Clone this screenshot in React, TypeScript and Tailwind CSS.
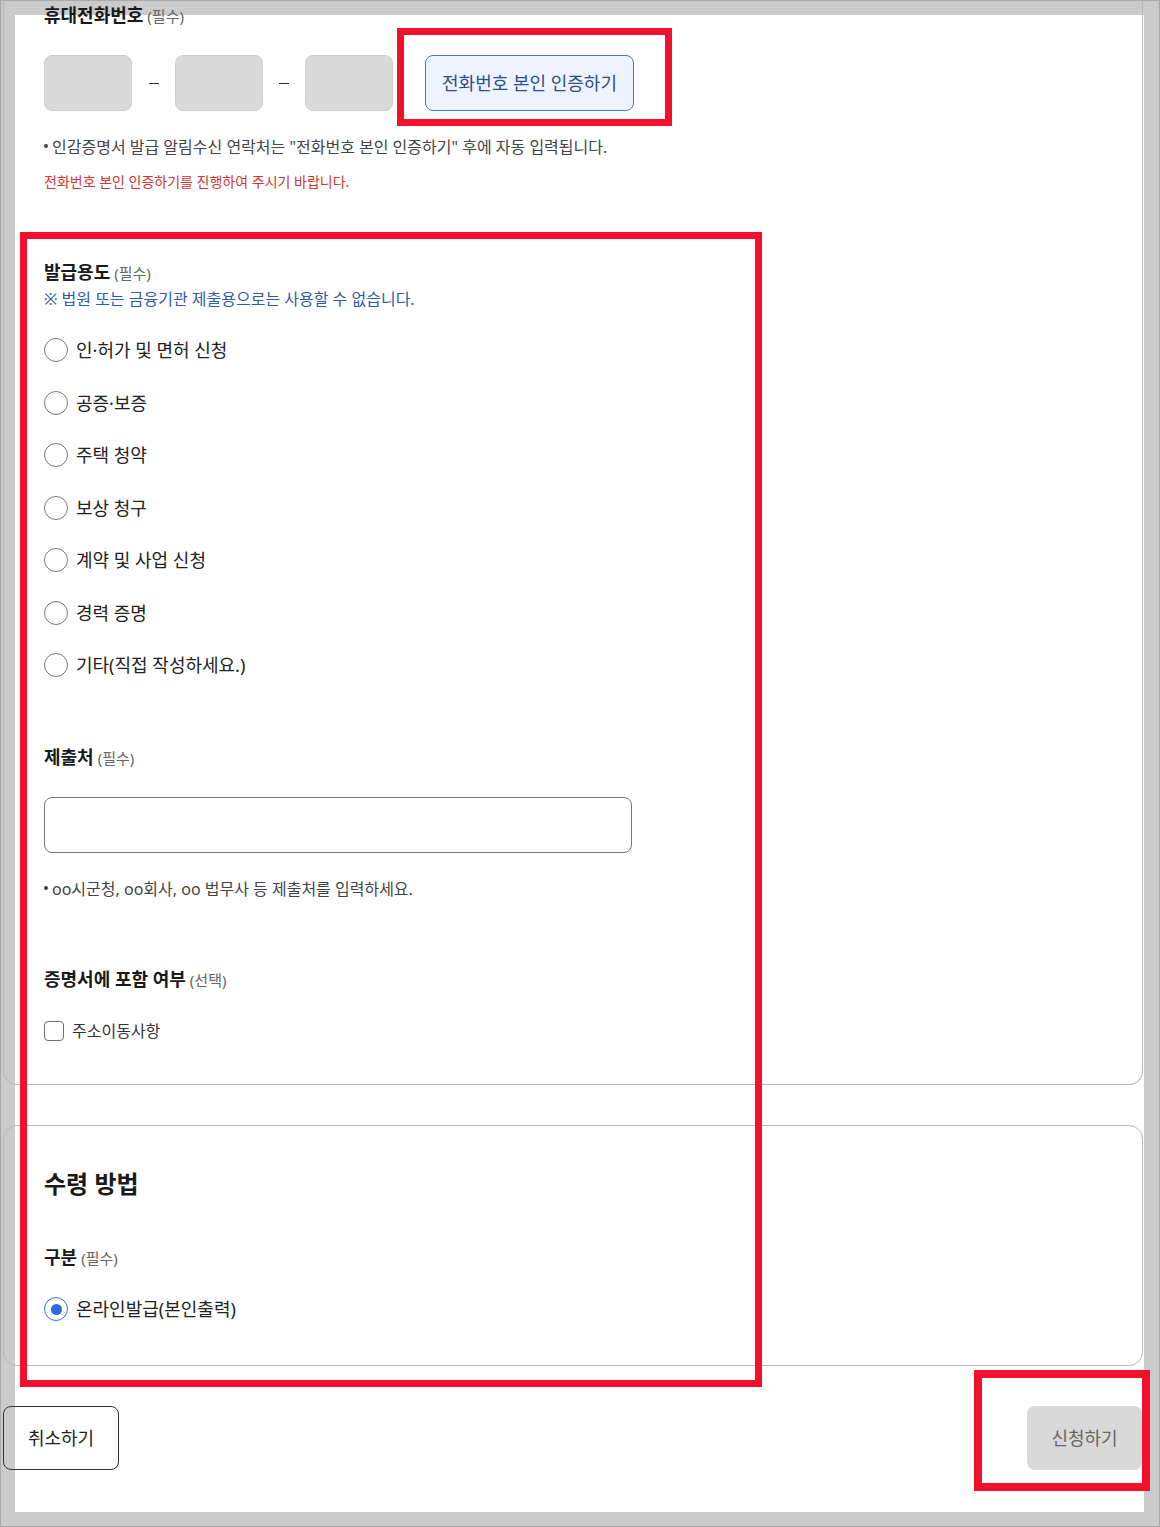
import React from "react";

function Radio({ label, checked = false }: { label: string; checked?: boolean }) {
  return (
    <div className="flex items-center h-[24px]">
      {checked ? (
        <span className="flex items-center justify-center w-[24px] h-[24px] rounded-full border border-[#3b72d6] bg-white">
          <span className="w-[11px] h-[11px] rounded-full bg-[#2a6be0]" />
        </span>
      ) : (
        <span className="w-[24px] h-[24px] rounded-full border border-[#7a7a7a] bg-white" />
      )}
      <span className="ml-[8px] text-[18px] leading-[24px] whitespace-nowrap text-[#222]">{label}</span>
    </div>
  );
}

function Label({ title, note }: { title: string; note: string }) {
  return (
    <div className="flex items-baseline h-[24px] whitespace-nowrap">
      <span className="text-[18px] leading-[24px] font-bold text-[#1a1a1a]">{title}</span>
      <span className="ml-[4px] text-[15px] leading-[24px] text-[#666]">{note}</span>
    </div>
  );
}

function Bullet({ children }: { children: React.ReactNode }) {
  return (
    <p className="flex items-center h-[24px] whitespace-nowrap text-[16px] leading-[24px] text-[#444]">
      <span className="w-[4px] h-[4px] rounded-full bg-[#444] mr-[4px] -mt-[2px]" />
      {children}
    </p>
  );
}

export default function App() {
  const uses = [
    "인·허가 및 면허 신청",
    "공증·보증",
    "주택 청약",
    "보상 청구",
    "계약 및 사업 신청",
    "경력 증명",
    "기타(직접 작성하세요.)",
  ];
  return (
    <div className="relative w-[1160px] h-[1527px] overflow-hidden bg-[#cbcbcb] border border-[#a9a9a9] font-['Noto_Sans','Noto_Sans_CJK_KR',sans-serif] text-[#222]">
      <div className="ml-[14px] mt-[14px] w-[1129px] h-[1497px] bg-white flex flex-col">
        <div className="-mt-[15px] -ml-[12px] w-[1140px] flex flex-col">
          {/* card 1 */}
          <div className="border-x border-b border-[#b9b9b9] rounded-b-[14px] pl-[40px] pt-[3px] pb-[43px] flex flex-col">
            <Label title="휴대전화번호" note="(필수)" />
            <div className="mt-[28px] flex items-center h-[56px]">
              <div className="w-[88px] h-[56px] rounded-[8px] bg-[#d9d9d9] border border-[#cdcdcd]" />
              <span className="w-[43px] flex justify-center">
                <span className="w-[10px] h-[1px] bg-[#333]" />
              </span>
              <div className="w-[88px] h-[56px] rounded-[8px] bg-[#d9d9d9] border border-[#cdcdcd]" />
              <span className="w-[42px] flex justify-center">
                <span className="w-[10px] h-[1px] bg-[#333]" />
              </span>
              <div className="w-[88px] h-[56px] rounded-[8px] bg-[#d9d9d9] border border-[#cdcdcd]" />
              <button className="ml-[32px] w-[209px] h-[56px] rounded-[8px] bg-[#edf4ff] border border-[#4a77bd] text-[18px] text-[#2f4d82] whitespace-nowrap">
                전화번호 본인 인증하기
              </button>
            </div>
            <div className="mt-[24px]">
              <Bullet>인감증명서 발급 알림수신 연락처는 "전화번호 본인 인증하기" 후에 자동 입력됩니다.</Bullet>
            </div>
            <p className="mt-[13px] h-[20px] whitespace-nowrap text-[14px] leading-[20px] text-[#cf3532]">
              전화번호 본인 인증하기를 진행하여 주시기 바랍니다.
            </p>

            <div className="mt-[68px]">
              <Label title="발급용도" note="(필수)" />
            </div>
            <p className="mt-[3px] h-[24px] whitespace-nowrap text-[16px] leading-[24px] text-[#2f5ca8]">
              ※ 법원 또는 금융기관 제출용으로는 사용할 수 없습니다.
            </p>
            <div className="mt-[27px] flex flex-col gap-[28.5px]">
              {uses.map((u) => (
                <Radio key={u} label={u} />
              ))}
            </div>

            <div className="mt-[68px]">
              <Label title="제출처" note="(필수)" />
            </div>
            <div className="mt-[28px] w-[588px] h-[56px] rounded-[8px] border border-[#777] bg-white" />
            <div className="mt-[24px]">
              <Bullet>oo시군청, oo회사, oo 법무사 등 제출처를 입력하세요.</Bullet>
            </div>

            <div className="mt-[66px]">
              <Label title="증명서에 포함 여부" note="(선택)" />
            </div>
            <div className="mt-[30px] flex items-center h-[20px]">
              <span className="w-[20px] h-[20px] rounded-[4px] border border-[#707070] bg-white" />
              <span className="ml-[8px] text-[16px] leading-[20px] text-[#333] whitespace-nowrap">주소이동사항</span>
            </div>
          </div>

          {/* card 2 */}
          <div className="mt-[40px] border border-[#b9b9b9] rounded-[14px] pl-[40px] pt-[42px] pb-[44px] flex flex-col">
            <h2 className="h-[32px] text-[24px] leading-[32px] font-bold text-[#1a1a1a] whitespace-nowrap">수령 방법</h2>
            <div className="mt-[45px]">
              <Label title="구분" note="(필수)" />
            </div>
            <div className="mt-[28px]">
              <Radio label="온라인발급(본인출력)" checked />
            </div>
          </div>

          {/* buttons */}
          <div className="mt-[40px] flex justify-between pr-[1px]">
            <button className="w-[116px] h-[64px] rounded-[8px] border border-[#333] text-[18px] text-[#222]">
              취소하기
            </button>
            <button className="w-[115px] h-[64px] rounded-[8px] bg-[#d9d9d9] text-[18px] text-[#666]">
              신청하기
            </button>
          </div>
        </div>
      </div>

      {/* annotation overlays */}
      <div className="absolute left-[396px] top-[27px] w-[275px] h-[98px] border-[7px] border-[#f2102c]" />
      <div className="absolute left-[19px] top-[231px] w-[742px] h-[1155px] border-[7px] border-[#f2102c]" />
      <div className="absolute left-[973px] top-[1369px] w-[176px] h-[121px] border-[8px] border-[#f2102c]" />
    </div>
  );
}
